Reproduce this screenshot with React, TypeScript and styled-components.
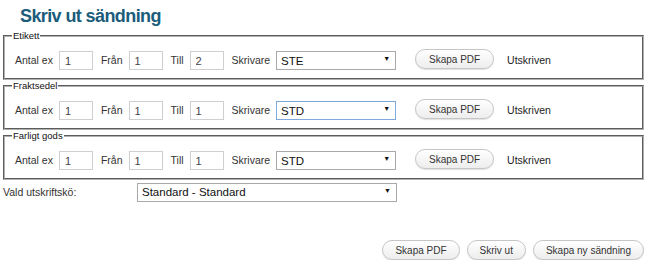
import * as React from 'react';
import styled, { createGlobalStyle } from 'styled-components';

const GlobalStyle = createGlobalStyle`
  body {
    margin: 0;
    background: #ffffff;
    font-family: 'Liberation Sans', Arial, sans-serif;
    color: #222222;
  }
`;

const Page = styled.div`
  width: 641px;
  padding: 0 8px 0 3px;
`;

const Title = styled.h1`
  margin: 0;
  padding: 5px 0 0 17px;
  height: 25px;
  font-size: 18px;
  letter-spacing: -0.6px;
  font-weight: bold;
  color: #1b5c7b;
  line-height: 22px;
`;

const Group = styled.fieldset`
  margin: 0;
  padding: 0 10px 7px 10px;
  border: 2px groove #b0b0b0;
`;

const Legend = styled.legend`
  padding: 0 1px;
  margin-left: -3px;
  font-size: 9.5px;
  line-height: 11px;
  color: #111111;
`;

const Row = styled.div`
  display: flex;
  align-items: center;
  height: 22px;
  margin-top: 8px;
`;

const Label = styled.span`
  font-size: 10.5px;
  color: #333333;
  margin-right: 6px;
`;

const NumInput = styled.input`
  box-sizing: border-box;
  width: 34px;
  height: 19px;
  margin: 1px 8px 0 0;
  padding: 0 0 0 5px;
  border: 1px solid #cfcfcf;
  font-family: 'Liberation Sans', Arial, sans-serif;
  font-size: 11px;
  color: #444444;
  outline: none;
`;

const SelectWrap = styled.div<{ $width: number }>`
  position: relative;
  width: ${(p) => p.$width}px;
`;

const Select = styled.select<{ $focus?: boolean }>`
  appearance: none;
  -webkit-appearance: none;
  box-sizing: border-box;
  width: 100%;
  height: 19px;
  margin: 1px 0 0 0;
  padding: 0 0 0 4px;
  border: 1px solid ${(p) => (p.$focus ? '#7fa9dc' : '#a9a9a9')};
  border-radius: 0;
  background: #ffffff;
  font-family: 'Liberation Sans', Arial, sans-serif;
  font-size: 11.5px;
  color: #111111;
  outline: none;
`;

const Arrow = styled.span`
  position: absolute;
  right: 6px;
  top: 5px;
  font-size: 7px;
  color: #111111;
  pointer-events: none;
`;

const PillButton = styled.button`
  box-sizing: border-box;
  height: 20px;
  padding: 0 12px;
  border: 1px solid #c6c6c6;
  border-radius: 10px;
  background: linear-gradient(#ffffff, #ededed);
  box-shadow: 0 1px 1px rgba(0, 0, 0, 0.12);
  font-family: 'Liberation Sans', Arial, sans-serif;
  font-size: 10px;
  color: #333333;
  white-space: nowrap;
  cursor: pointer;
`;

const RowButton = styled(PillButton)`
  width: 79px;
  padding: 0;
  margin: -2px 0 0 19px;
`;

const Status = styled.span`
  font-size: 10.5px;
  color: #222222;
  margin-left: 13px;
`;

const QueueRow = styled.div`
  display: flex;
  align-items: center;
  height: 19px;
  margin-top: 2px;
`;

const QueueLabel = styled.span`
  width: 134px;
  font-size: 10.5px;
  color: #333333;
`;

const Footer = styled.div`
  display: flex;
  justify-content: flex-end;
  gap: 7px;
  margin-top: 39px;
`;

type Section = {
  name: string;
  till: string;
  printer: string;
  focus?: boolean;
};

const sections: Section[] = [
  { name: 'Etikett', till: '2', printer: 'STE' },
  { name: 'Fraktsedel', till: '1', printer: 'STD', focus: true },
  { name: 'Farligt gods', till: '1', printer: 'STD' },
];

const PrintGroup = ({ section }: { section: Section }) => (
  <Group>
    <Legend>{section.name}</Legend>
    <Row>
      <Label>Antal ex</Label>
      <NumInput defaultValue="1" />
      <Label>Från</Label>
      <NumInput defaultValue="1" />
      <Label>Till</Label>
      <NumInput defaultValue={section.till} />
      <Label>Skrivare</Label>
      <SelectWrap $width={120}>
        <Select $focus={section.focus} defaultValue={section.printer}>
          <option value="STE">STE</option>
          <option value="STD">STD</option>
        </Select>
        <Arrow>▼</Arrow>
      </SelectWrap>
      <RowButton>Skapa PDF</RowButton>
      <Status>Utskriven</Status>
    </Row>
  </Group>
);

export default function App() {
  return (
    <Page>
      <GlobalStyle />
      <Title>Skriv ut sändning</Title>
      {sections.map((s) => (
        <PrintGroup key={s.name} section={s} />
      ))}
      <QueueRow>
        <QueueLabel>Vald utskriftskö:</QueueLabel>
        <SelectWrap $width={260}>
          <Select defaultValue="std">
            <option value="std">Standard - Standard</option>
          </Select>
          <Arrow>▼</Arrow>
        </SelectWrap>
      </QueueRow>
      <Footer>
        <PillButton>Skapa PDF</PillButton>
        <PillButton>Skriv ut</PillButton>
        <PillButton>Skapa ny sändning</PillButton>
      </Footer>
    </Page>
  );
}
